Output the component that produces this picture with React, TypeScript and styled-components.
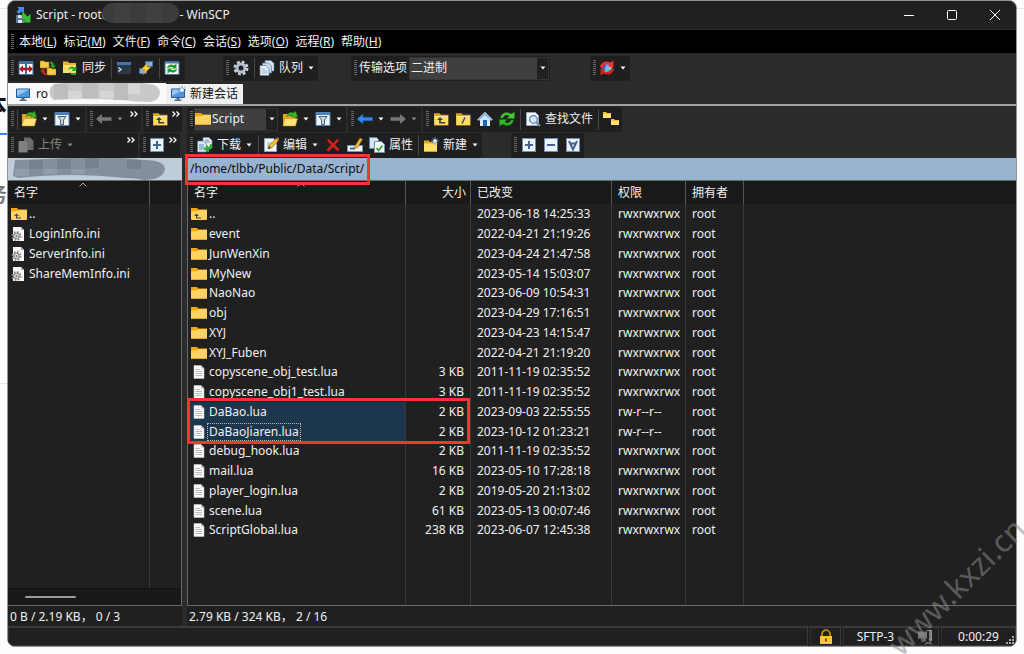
import React from "react";
import styled, { createGlobalStyle, css } from "styled-components";

const GlobalStyle = createGlobalStyle`
  * { box-sizing: border-box; }
  body { margin: 0; background: #fdfdfd; }
  body, button, select, input {
    font-family: "Noto Sans", "Noto Sans CJK SC", sans-serif;
    font-size: 12px;
    line-height: 18px;
  }
  button, select { margin: 0; padding: 0; border: 0; background: none; color: inherit; }
`;

/* ---------- page and window frame ---------- */

const Page = styled.div`
  position: relative;
  display: grid;
  grid-template-columns: 7px minmax(0, 1fr) 7px;
  height: 100vh;
  min-height: 480px;
  padding-bottom: 7px;
  overflow: hidden;
`;

const Gutter = styled.div`
  display: flex;
  flex-direction: column;
  align-items: flex-end;
  min-width: 0;
  padding-top: 8px;
  overflow: hidden;
`;

const Rule = styled.div<{ $blue?: boolean }>`
  flex: none;
  width: 100%;
  height: ${(p) => (p.$blue ? 2 : 1)}px;
  background: ${(p) => (p.$blue ? "#3a86f0" : "#e4e4e4")};
`;

const Peek = styled.div<{ $muted?: boolean }>`
  flex: none;
  height: ${(p) => (p.$muted ? 248 : 42)}px;
  padding-top: ${(p) => (p.$muted ? 46 : 0)}px;
  margin-top: ${(p) => (p.$muted ? 0 : 82)}px;
  font-size: ${(p) => (p.$muted ? 20 : 24)}px;
  font-weight: 700;
  line-height: 28px;
  color: ${(p) => (p.$muted ? "#777" : "#111")};
`;

const Window = styled.main`
  display: flex;
  flex-direction: column;
  min-width: 0;
  min-height: 0;
  border: 1px solid #8d9294;
  border-radius: 8px;
  background: #2b2b2b;
  color: #f0f0f0;
  overflow: hidden;
`;

const TitleBar = styled.header`
  display: flex;
  flex: none;
  align-items: center;
  height: 29px;
  padding-left: 7px;
  background: #202020;
  border-bottom: 1px solid #2c2c2c;
`;

const Title = styled.h1`
  display: flex;
  flex: 1;
  align-items: center;
  margin: 0 0 0 5px;
  font-size: 12px;
  font-weight: 400;
  white-space: pre;
`;

const Caption = styled.button`
  display: grid;
  place-items: center;
  width: 43px;
  height: 28px;
`;

const MenuBar = styled.nav`
  display: flex;
  flex: none;
  align-items: center;
  height: 23px;
  padding-left: 3px;
  background: #000;
`;

const MenuItem = styled.button`
  flex: none;
  margin-right: 7px;
  white-space: nowrap;
`;

/* ---------- toolbars ---------- */

const ToolRow = styled.div<{ $main?: boolean; $local?: boolean }>`
  display: flex;
  flex: none;
  align-items: center;
  gap: 2px;
  height: ${(p) => (p.$main ? 30 : 26)}px;
  padding-right: ${(p) => (p.$local ? 2 : 0)}px;
  overflow: hidden;
`;

const Band = styled.div<{ $offset?: number; $grow?: boolean; $end?: number }>`
  display: flex;
  flex: ${(p) => (p.$grow ? "1 1 0" : "none")};
  align-items: center;
  height: 25px;
  padding: 0 ${(p) => p.$end ?? 0}px 0 3px;
  margin-left: ${(p) => p.$offset ?? 0}px;
  border-radius: 2px;
  background: #1f1f1f;
`;

const Grip = styled.span`
  flex: none;
  width: 3px;
  height: 16px;
  margin-right: 1px;
  background: repeating-linear-gradient(#666 0 1px, transparent 1px 2px);
`;

const MenuGrip = styled(Grip)`
  margin-right: 5px;
`;

const Divider = styled.span`
  flex: none;
  width: 1px;
  height: 21px;
  margin: 0 1px 0 2px;
  background: #454545;
`;

const Tool = styled.button<{ $dim?: boolean; $tight?: boolean; $drop?: boolean }>`
  display: flex;
  flex: none;
  align-items: center;
  justify-content: center;
  gap: 4px;
  min-width: ${(p) => (p.$tight ? 19 : 22)}px;
  height: 22px;
  padding: 0 ${(p) => (p.$tight ? 0 : p.$drop ? 1 : 3)}px 0 ${(p) => (p.$tight ? 0 : 3)}px;
  color: ${(p) => (p.$dim ? "#858585" : "#f0f0f0")};
  white-space: nowrap;
`;

const DropButton = styled.button<{ $dim?: boolean }>`
  display: grid;
  flex: none;
  place-items: center;
  width: 14px;
  height: 22px;
  color: ${(p) => (p.$dim ? "#8a8a8a" : "#fff")};
`;

const MoreButton = styled.button`
  display: grid;
  place-items: center;
  align-self: flex-start;
  width: 14px;
  height: 14px;
  margin-left: auto;
`;

const Combo = styled.label<{ $wide?: boolean }>`
  display: flex;
  flex: none;
  align-items: center;
  height: 23px;
  width: ${(p) => (p.$wide ? 140 : 84)}px;
  margin-right: ${(p) => (p.$wide ? 0 : 2)}px;
  border: 1px solid #343434;
  background: #3f3f3f;

  select {
    flex: 1;
    min-width: 0;
    height: 21px;
    padding-left: 1px;
    appearance: none;
    outline: 0;
  }
`;

const ComboArrow = styled.span`
  display: grid;
  place-items: center;
  width: 11px;
  height: 21px;
  background: #202020;
`;

const BandLabel = styled.label`
  width: 51px;
  padding-left: 1px;
  white-space: nowrap;
`;

/* ---------- session tabs ---------- */

const Tabs = styled.div`
  display: flex;
  flex: none;
  align-items: flex-end;
  height: 23px;
  border-bottom: 2px solid #a2a2a2;
`;

const Tab = styled.button<{ $active?: boolean }>`
  display: flex;
  align-items: center;
  gap: ${(p) => (p.$active ? 5 : 4)}px;
  width: ${(p) => (p.$active ? 158 : 77)}px;
  height: ${(p) => (p.$active ? 21 : 20)}px;
  padding-left: ${(p) => (p.$active ? 7 : 4)}px;
  background: ${(p) => (p.$active ? "#fafafa" : "#f0f0f0")};
  color: #111;
  white-space: nowrap;
`;

/* ---------- panels ---------- */

const Panels = styled.div`
  display: grid;
  flex: 1;
  grid-template-columns: 174px minmax(0, 1fr);
  gap: 5px;
  min-height: 0;
`;

const Panel = styled.section`
  display: flex;
  flex-direction: column;
  min-width: 0;
  min-height: 0;
`;

const PathBar = styled.div<{ $active?: boolean }>`
  position: relative;
  display: flex;
  flex: none;
  align-items: center;
  height: 23px;
  padding-left: ${(p) => (p.$active ? 3 : 1)}px;
  border-bottom: 1px solid #686868;
  background: ${(p) => (p.$active ? "#99b4d1" : "#bfcddb")};
  color: #0b0b0b;
`;

const ListBox = styled.div<{ $active?: boolean }>`
  position: relative;
  display: flex;
  flex: 1;
  flex-direction: column;
  min-height: 0;
  border: solid #666a70;
  border-width: 0 ${(p) => (p.$active ? 0 : 1)}px 1px ${(p) => (p.$active ? 1 : 0)}px;
  background: #202020;
`;

const Scroller = styled.div`
  flex: 1;
  min-height: 0;
  overflow: hidden;
`;

const FileTable = styled.table`
  width: 100%;
  height: 100%;
  table-layout: fixed;
  border-collapse: separate;
  border-spacing: 0;

  th, td {
    padding: 0 6px;
    font-weight: 400;
    text-align: left;
    white-space: nowrap;
    border-left: 1px solid #363b40;
  }
  th:first-child, td:first-child { border-left: 0; padding: 0 0 0 3px; }
  th {
    position: relative;
    height: 23px;
    background: #191919;
    border-left-color: #555;
  }
  th:first-child { padding-left: 6px; }
`;

const Row = styled.tr<{ $selected?: boolean }>`
  height: 20px;
  &:nth-child(4n) { height: 19px; }
  ${(p) =>
    p.$selected &&
    css`
      td:first-child { background: #1b364d; }
    `}
`;

const FillRow = styled.tr`
  height: 100%;
`;

const FileCell = styled.div`
  display: flex;
  align-items: center;
  height: 19px;
`;

const FileName = styled.span<{ $focused?: boolean }>`
  padding: 0 1px;
  border: 1px ${(p) => (p.$focused ? "dotted #c9b79f" : "solid transparent")};
  line-height: 16px;
`;

const Numeric = styled.td`
  && { text-align: right; }
`;

const SizeHead = styled.th`
  && { text-align: right; padding-right: 4px; }
`;

const SortMark = styled.svg`
  position: absolute;
  top: 1px;
  left: 50%;
`;

const ScrollTrack = styled.div`
  flex: none;
  height: 17px;
  padding: 7px 0 0 17px;
  border-top: 1px solid #111;
  background: #181818;
`;

const ScrollThumb = styled.div`
  width: 51px;
  height: 2px;
  border-radius: 1px;
  background: #9a9a9a;
`;

const PanelStatus = styled.div`
  flex: none;
  height: 20px;
  padding: 2px 0 0 2px;
  background: #202020;
  white-space: pre;
`;

const Mark = styled.div<{ $rows?: boolean }>`
  position: absolute;
  z-index: 2;
  border: 3px solid #f63434;
  pointer-events: none;
  ${(p) =>
    p.$rows
      ? css`top: 217px; left: -1px; width: 283px; height: 46px;`
      : css`top: -4px; left: -2px; width: 185px; height: 31px;`}
`;

const StatusBar = styled.footer`
  display: flex;
  flex: none;
  gap: 2px;
  height: 20px;
  border-top: 1px solid #3a3a3a;
  background: #202020;
`;

const StatusCell = styled.div<{ $width?: number }>`
  display: flex;
  flex: ${(p) => (p.$width ? "none" : "1")};
  align-items: center;
  justify-content: center;
  width: ${(p) => (p.$width ? p.$width + "px" : "auto")};
  border: 1px solid #3a3a3a;
  border-left-color: #303030;
`;

const ClockCell = styled(StatusCell)`
  position: relative;
  svg { position: absolute; right: 1px; bottom: 1px; }
`;

const Watermark = styled.div`
  position: absolute;
  right: 68px;
  bottom: 68px;
  width: 0;
  height: 0;
  display: flex;
  align-items: center;
  justify-content: center;
  transform: rotate(-45deg);
  font-size: 31px;
  color: rgba(140, 140, 140, 0.55);
  white-space: nowrap;
  pointer-events: none;
`;

/* ---------- icons ---------- */

const IconSvg = styled.svg`
  flex: none;
`;

const Folder = () => (
  <>
    <path d="M1 2.200h5.500l1.400 1.600H15.500v10.700H1z" fill="#e0a21a" />
    <path d="M1.500 5h13.500v9H1.500z" fill="#ffdc62" />
    <path d="M1.500 5h13.500v1H1.500z" fill="#fff0a8" />
  </>
);
const Page16 = () => (
  <>
    <path d="M1.500 1.500h9l3 3v10h-12z" fill="#f2f6fa" stroke="#8ea6bd" />
    <path d="M4 6h6M4 8h7M4 10h5" stroke="#9bb2c8" />
  </>
);
const Screen = () => (
  <>
    <path d="M1.500 3h13v8.500h-13z" fill="#4f97dd" stroke="#2d5688" />
    <path d="M2 3.500h12L2 10z" fill="#93c7f5" />
    <path d="M6.500 12h3v1.500h2V15h-7v-1.500h2z" fill="#56708c" />
  </>
);
const Frame = ({ children }: { children: React.ReactNode }) => (
  <>
    <path d="M1 1h14v14H1z" fill="#6f8fb5" />
    <path d="M2 2h12v12H2z" fill="#edf3fa" />
    {children}
  </>
);

const icons = {
  app: (
    <>
      <path d="M1 8h8v8H1z" fill="#5f7896" />
      <path d="M3 8h4v3H3zM3 13h4v3H3z" fill="#dfe8f2" />
      <path d="M2 0h7v6.500L6.700 4.500 4 7 1.500 4.500 4.200 2z" fill="#3d8ff0" />
      <path d="M8 5l4.500 4.500L15.500 7v8.500H7.500l2.300-2.500-4-4z" fill="#37bf38" />
    </>
  ),
  compare: (
    <>
      <path d="M1 1.500h14v13H1z" fill="#f5f8fc" stroke="#45719f" />
      <path d="M1 1.500h14v2.500H1z" fill="#3d6fa8" />
      <path d="M8 2v12" stroke="#3d6fa8" strokeWidth="2" />
      <path d="M1 9l4-3.500v2.300h6V5.500L15 9l-4 3.500v-2.300H5v2.300z" fill="#b01818" />
    </>
  ),
  syncDirs: (
    <>
      <path d="M0 1h4l1 1h4v6H0zM7 8h4l1 1h4v6H7z" fill="#f4cd45" stroke="#b88210" strokeWidth=".6" />
      <path d="M10 1.500c3 0 4 1.500 4 4h2l-3 3-3-3h1.700c0-1.500-.5-2-1.700-2z" fill="#26a22b" />
      <path d="M6 15c-3 0-4-2-4-3.500H0l3-3 3 3H4.300c0 1 .7 1.500 1.700 1.500z" fill="#d42121" />
    </>
  ),
  syncFolder: (
    <>
      <path d="M1 1.500h5l1 1.500h7v10H1z" fill="#e8b62a" />
      <path d="M1 5h13v8H1z" fill="#ffe06c" />
      <path d="M5.500 10c2-4 5.500-4 7-2.500L14.500 6v5h-5l1.500-1.500C10 8.500 7.500 8.500 5.500 10zM7 11.500c2 2 4 2 6 1L15 14c-3 2-7 1-8-2.500z" fill="#2bab2d" />
    </>
  ),
  terminal: (
    <>
      <path d="M1 2h14v12H1z" fill="#2b3848" />
      <path d="M1 2h14v3H1z" fill="#4674ad" />
      <path d="M2.500 7.500L5 9.500l-2.500 2" stroke="#e4ebf2" strokeWidth="1.200" fill="none" />
    </>
  ),
  bolt: (
    <>
      <path d="M7 1h8v6H7zM1 8h8v6H1z" fill="#3f6ca4" />
      <path d="M8 2h6v4H8zM2 9h6v4H2z" fill="#86b3e0" />
      <path d="M10.500 2L3 9.500h4L4.500 15 13 7H9z" fill="#ffd13c" stroke="#a9750d" strokeWidth=".5" />
    </>
  ),
  refreshPage: (
    <>
      <path d="M1 1.500h14v13H1z" fill="#f5f8fc" stroke="#4a6e96" />
      <path d="M1 1.500h14v2H1z" fill="#4a78ad" />
      <path d="M3 8c.5-3.500 4.500-4.500 7-2.800L12.500 3.500v5H8l1-1.200C7.500 6.500 6 7 3 8zM13 9c-.5 3.500-4.500 4.500-7 2.800L3.500 13.500v-5H8L7 9.700c1.500.8 3 .3 6-.7z" fill="#22a12a" />
    </>
  ),
  gear: (
    <>
      <circle cx="8" cy="8" r="6" fill="none" stroke="#c7d1dc" strokeWidth="3" strokeDasharray="2.700 2.010" />
      <circle cx="8" cy="8" r="4" fill="none" stroke="#b4c0cd" strokeWidth="3" />
    </>
  ),
  queue: (
    <>
      <path d="M6 .5h6l3 3V11H6z" fill="#dce8f4" stroke="#5f7d9c" strokeWidth=".7" />
      <path d="M3.500 3h6l3 3v7h-9z" fill="#c8daec" stroke="#5f7d9c" strokeWidth=".7" />
      <path d="M1 5.500h6l3 3v7H1z" fill="#e7f0f8" stroke="#5f7d9c" strokeWidth=".7" />
      <path d="M2.500 9h4M2.500 11h6M2.500 13h6" stroke="#9cb4cc" />
    </>
  ),
  reconnect: (
    <>
      <circle cx="8" cy="8" r="5.500" fill="#2f62a8" />
      <path d="M3 9.500l3-1 1-4 4-.5-1 3 3 1.500-1 3-4 1z" fill="#6cb0f2" />
      <path d="M9 6l4-1v4l-3 .5zM3 10l3 .5L7 13H4z" fill="#8fd686" />
      <path d="M1 7.500C1.500 2 7 0 11.500 2.500L14.500.5V7H8.500l1.700-2C8 3.800 5 4 3.800 7.500z" fill="#e53434" />
      <path d="M15 8.500C14.500 14 9 16 4.500 13.500L1.500 15.500V9h4.500l-.8 2.500c2.800 1.200 6 0 7-3z" fill="#d02222" />
      <path d="M6.500 8.500L9 6l2 1.500L8.500 10z" fill="#7dbcf7" />
    </>
  ),
  screen: <Screen />,
  newScreen: (
    <>
      <Screen />
      <path d="M12 0v8M8 4h8M9.500 1.500l5 5M14.500 1.500l-5 5" stroke="#4f86bd" />
      <circle cx="12" cy="4" r="2" fill="#e4f2ff" />
    </>
  ),
  open: (
    <>
      <path d="M1 3h5l1 1.500h6.500V14H1z" fill="#dca823" />
      <path d="M3 7.500h12.500L13.500 15H1z" fill="#ffe377" stroke="#c39015" strokeWidth=".5" />
      <path d="M5 5.500C6 1.500 9 .5 11.500 2L13.500 0l2.200 6H9.500l1.500-1.500C9 3.500 7 4 5 5.500z" fill="#35b52e" stroke="#167a16" strokeWidth=".5" />
    </>
  ),
  filter: (
    <>
      <path d="M1 1.500h14v13H1z" fill="#f1f6fb" stroke="#5a88bd" />
      <path d="M1 1.500h14v2.500H1z" fill="#4b7db8" />
      <path d="M4 5.500h8L9.500 9v4.500h-3V9z" fill="#cbd5df" stroke="#4e6073" />
    </>
  ),
  backDim: <path d="M0 8l6-5v3.200h9.500v3.600H6V13z" fill="#777" />,
  back: <path d="M0 8l6-5v3.200h9.500v3.600H6V13z" fill="#3388ea" stroke="#1754a5" strokeWidth=".5" />,
  forwardDim: <path d="M16 8l-6-5v3.200H.5v3.600H10V13z" fill="#777" />,
  parent: (
    <>
      <Folder />
      <path d="M7 6L4 9h2.200v3.500h6v-1.400H7.800V9H10z" fill="#33404d" />
    </>
  ),
  root: (
    <>
      <Folder />
      <path d="M10 6.500L7 12.500" stroke="#33404d" strokeWidth="1.400" />
    </>
  ),
  home: (
    <>
      <path d="M3 7h10v8H3z" fill="#dceafa" />
      <path d="M.5 8.500L8 1l7.500 7.500-1.500 1L8 4 2 9.500z" fill="#7db1e8" stroke="#dceafa" strokeWidth=".5" />
      <path d="M8 4l5 4.500V10H3V8.500z" fill="#cfe3f8" />
      <path d="M6 9h4v6H6z" fill="#1c69c4" />
    </>
  ),
  refresh: (
    <>
      <path d="M1.500 7C2 2 8 0 12 3L15.500 1v6.500H8L10.300 5C8 3.200 5 4 4 7z" fill="#45c934" stroke="#137914" strokeWidth=".5" />
      <path d="M14.500 9c-.5 5-6.500 7-10.500 4L.5 15V8.500H8L5.700 11c2.300 1.800 5.300 1 6.300-2z" fill="#37b52b" stroke="#137914" strokeWidth=".5" />
    </>
  ),
  find: (
    <>
      <Page16 />
      <path d="M11.500 11.500L15 15" stroke="#72869b" strokeWidth="2" />
      <circle cx="8.500" cy="8.500" r="3.800" fill="#d3eafd" stroke="#5e7894" strokeWidth="1.200" />
    </>
  ),
  tree: (
    <>
      <path d="M4 8v4h5M7 4h3" fill="none" stroke="#111" strokeDasharray="1 1" />
      <path d="M0 1h3l1 1h4v5H0zM8 8h3l1 1h4v5H8z" fill="#f2bd2f" />
      <path d="M0 3h8v4H0zM8 10h8v4H8z" fill="#ffe37a" />
    </>
  ),
  uploadDim: (
    <>
      <path d="M6 .5h6l3.500 3.500v9H6z" fill="#6b6b6b" />
      <path d="M.5 4h7l2 2v9.500h-9z" fill="#808080" />
    </>
  ),
  download: (
    <>
      <path d="M6 .5h6l3 3V11H6z" fill="#f0f5fa" stroke="#6483a3" strokeWidth=".7" />
      <path d="M.5 4h6l3 3v8h-9z" fill="#dbe8f4" stroke="#557ba2" strokeWidth=".7" />
      <path d="M2 8h5M2 10h5M2 12h4M8 3h4M8 5h5" stroke="#6189b2" />
      <path d="M15 7c.5 3-.5 5-3 6v2.500L6 12l5-4v2c1.500-.4 2.200-1.500 2-3z" fill="#2cb534" />
    </>
  ),
  edit: (
    <>
      <Page16 />
      <path d="M5 12l1-3.500L13 1.500l2.500 2L8.500 11z" fill="#f6bd37" stroke="#8b611c" strokeWidth=".6" />
      <path d="M13 1.500l2.500 2 .5-2-1.500-1.300z" fill="#d96d54" />
      <path d="M5 12l1-3 2 1.700z" fill="#333" />
    </>
  ),
  remove: <path d="M2 3.500L3.800 2 8 6.300 12.500 1.800 14 3.300 10 8l4.500 4.500-2 1.800L8 10l-4.500 4.500L1.500 13 6 8z" fill="#dc1d1d" />,
  rename: (
    <>
      <path d="M.5 8.500h15v6H.5z" fill="#edf3f9" stroke="#7b93ab" />
      <path d="M3 11.500h5" stroke="#3b6fae" strokeWidth="2" />
      <path d="M7 12l1-3 5-8 2.500 1.500-5 8z" fill="#f5b93a" stroke="#8b611c" strokeWidth=".6" />
    </>
  ),
  properties: (
    <>
      <path d="M.5.5h7l2 2v9h-9z" fill="#d7e5f3" stroke="#6585a6" />
      <path d="M5.500 4.500h7l3 3v8h-10z" fill="#f8fbfd" stroke="#7890a8" />
      <path d="M7.500 11l2 2.500 4-5" fill="none" stroke="#27a12e" strokeWidth="1.600" />
    </>
  ),
  newFolder: (
    <>
      <path d="M1 3.500h5l1 1.500h7v9.500H1z" fill="#dfa61f" />
      <path d="M1 6.500h13v8H1z" fill="#ffdf69" />
      <path d="M12 0v8M8 4h8M9.500 1.500l5 5M14.500 1.500l-5 5" stroke="#6d9dcb" />
      <circle cx="12" cy="4" r="1.800" fill="#e9f4ff" />
    </>
  ),
  plus: <Frame><path d="M8 4v8M4 8h8" stroke="#44648b" strokeWidth="2" /></Frame>,
  minus: <Frame><path d="M4 8h8" stroke="#44648b" strokeWidth="2" /></Frame>,
  select: <Frame><path d="M4 4l4 8.500L12 4M5 6.500h6" fill="none" stroke="#44648b" strokeWidth="2" /></Frame>,
  folder: (
    <>
      <path d="M0 2h6l1.500 1.500H16V8H0z" fill="#f0a90c" />
      <path d="M0 5.500L7 5l1-1h7.500L16 4.500V13a1 1 0 0 1-1 1H1a1 1 0 0 1-1-1z" fill="#ffd361" />
      <path d="M.5 13.500h15" stroke="#e0a734" />
    </>
  ),
  folderUp: (
    <>
      <path d="M0 2h6l1.500 1.500H16V8H0z" fill="#f0a90c" />
      <path d="M0 5.500L7 5l1-1h7.500L16 4.500V13a1 1 0 0 1-1 1H1a1 1 0 0 1-1-1z" fill="#ffd361" />
      <path d="M5.500 7.500L3 10h2v2.500h5v-1H6.200V10H8z" fill="#39495a" />
    </>
  ),
  doc: (
    <>
      <path d="M3 1.500h7l3 3v10H3z" fill="#fafafa" stroke="#c9c9c9" strokeWidth=".6" />
      <path d="M10 1.500v3h3" fill="#c4c4c4" />
      <path d="M4.500 5.500h4M4.500 7.500h6.500M4.500 9.500h6.500M4.500 11.500h6.500" stroke="#aaa" strokeWidth=".8" />
    </>
  ),
  ini: (
    <>
      <path d="M2 1h8l3 3v11H2z" fill="#f7f7f7" />
      <path d="M10 1v3h3" fill="#aaa" />
      <circle cx="5.500" cy="10" r="4" fill="none" stroke="#8d8d8d" strokeWidth="2" strokeDasharray="1.600 1.540" />
      <circle cx="5.500" cy="10" r="2.800" fill="#ddd" stroke="#777" />
      <circle cx="5.500" cy="10" r="1" fill="#777" />
    </>
  ),
  lock: (
    <>
      <path d="M4 8V5a4 3.800 0 0 1 8 0v3" fill="none" stroke="#c48a14" strokeWidth="1.800" />
      <path d="M2 7h12v8H2z" fill="#f7bd2a" />
      <path d="M2 8.500h12M2 11h12M2 13.500h12" stroke="#ffdc70" strokeWidth=".7" />
      <path d="M8 9.500v3" stroke="#5c3f0a" strokeWidth="1.600" />
    </>
  ),
  network: (
    <>
      <path d="M1 2.500h9v7H1zM12 1.500h3v11h-3z" fill="#777" />
      <path d="M10 1.500h4.500v9H12M4 10h4v2H4M9 14h5M8 15.500l2-2M15 15.500l-2-2" fill="none" stroke="#999" />
    </>
  ),
};

type IconName = keyof typeof icons;
const Icon = ({ name }: { name: IconName }) => (
  <IconSvg width="16" height="16" viewBox="0 0 16 16" aria-hidden="true">
    {icons[name]}
  </IconSvg>
);

const Triangle = () => (
  <svg width="6" height="4" viewBox="0 0 6 4" aria-hidden="true">
    <path d="M.5 .5h5L3 3.500z" fill="currentColor" />
  </svg>
);

const Drop = ({ label, dim }: { label: string; dim?: boolean }) => (
  <DropButton $dim={dim} aria-label={label}>
    <Triangle />
  </DropButton>
);

const More = () => (
  <MoreButton aria-label="More">
    <svg width="8" height="6" viewBox="0 0 8 6" aria-hidden="true">
      <path d="M.5.5L3 3 .5 5.500M4.500.5L7 3 4.500 5.500" fill="none" stroke="#fff" strokeWidth="1.300" />
    </svg>
  </MoreButton>
);

type ToolProps = { name: IconName; label: string; dim?: boolean; tight?: boolean };
const IconTool = ({ name, label, dim, tight }: ToolProps) => (
  <Tool aria-label={label} $dim={dim} $tight={tight}>
    <Icon name={name} />
  </Tool>
);

type TextToolProps = { name: IconName; children: string; dim?: boolean; drop?: boolean };
const TextTool = ({ name, children, dim, drop }: TextToolProps) => (
  <Tool $dim={dim} $drop={drop}>
    <Icon name={name} />
    {children}
  </Tool>
);

const TitleBlot = styled.svg`
  flex: none;
  margin-left: -11px;
`;

const TitleSmudge = () => (
  <TitleBlot width="78" height="28" viewBox="0 0 78 28" aria-hidden="true">
    <rect x="0" y="2" width="77" height="20" rx="10" fill="#3c3c3c" />
    <path d="M12 2h16v20H12zM44 2h16v20H44z" fill="#404040" />
  </TitleBlot>
);

const TabBlot = styled.svg`
  flex: none;
  margin-left: -7px;
`;

const TabSmudge = () => (
  <TabBlot width="114" height="21" viewBox="0 0 114 21" aria-hidden="true">
    <path d="M9 1Q56-6 104 1a10 9 0 0 1 0 18Q90 19 76 17 40 15 8 17A9 9 0 0 1 9 1z" fill="#c9c9c9" />
    <path d="M8 1h14v15H8zM36 0h16v15H36zM68 0h14v17H68z" fill="#bdbdbd" />
    <path d="M22 8h14v8H22zM54 8h14v7H54zM82 1h12v10H82z" fill="#d6d6d6" />
  </TabBlot>
);

const PathSmudge = () => (
  <svg width="158" height="22" viewBox="0 0 158 22" aria-hidden="true">
    <path d="M6 2Q60 0 85-1q20 0 50 3 20 0 21 9-1 10-20 11-10-2-20-2Q60 14 10 20L4 18z" fill="#858f9c" />
    <path d="M20 2h14v9H20zM48 1h14v10H48zM76 0h14v10H76zM118 2h14v9h-14z" fill="#77818f" />
    <path d="M6 11h14v7H6zM34 11h14v5H34zM62 11h14v5H62z" fill="#929daa" />
  </svg>
);

/* ---------- data ---------- */

const menus = [
  ["本地", "L"], ["标记", "M"], ["文件", "F"], ["命令", "C"],
  ["会话", "S"], ["选项", "O"], ["远程", "R"], ["帮助", "H"],
];

type Entry = {
  icon: IconName;
  name: string;
  size?: string;
  date?: string;
  rights?: string;
  selected?: boolean;
  focused?: boolean;
};

const localFiles: Entry[] = [
  { icon: "folderUp", name: ".." },
  { icon: "ini", name: "LoginInfo.ini" },
  { icon: "ini", name: "ServerInfo.ini" },
  { icon: "ini", name: "ShareMemInfo.ini" },
];

const full = "rwxrwxrwx";
const remoteFiles: Entry[] = [
  { icon: "folderUp", name: "..", date: "2023-06-18 14:25:33", rights: full },
  { icon: "folder", name: "event", date: "2022-04-21 21:19:26", rights: full },
  { icon: "folder", name: "JunWenXin", date: "2023-04-24 21:47:58", rights: full },
  { icon: "folder", name: "MyNew", date: "2023-05-14 15:03:07", rights: full },
  { icon: "folder", name: "NaoNao", date: "2023-06-09 10:54:31", rights: full },
  { icon: "folder", name: "obj", date: "2023-04-29 17:16:51", rights: full },
  { icon: "folder", name: "XYJ", date: "2023-04-23 14:15:47", rights: full },
  { icon: "folder", name: "XYJ_Fuben", date: "2022-04-21 21:19:20", rights: full },
  { icon: "doc", name: "copyscene_obj_test.lua", size: "3 KB", date: "2011-11-19 02:35:52", rights: full },
  { icon: "doc", name: "copyscene_obj1_test.lua", size: "3 KB", date: "2011-11-19 02:35:52", rights: full },
  { icon: "doc", name: "DaBao.lua", size: "2 KB", date: "2023-09-03 22:55:55", rights: "rw-r--r--", selected: true },
  { icon: "doc", name: "DaBaoJiaren.lua", size: "2 KB", date: "2023-10-12 01:23:21", rights: "rw-r--r--", selected: true, focused: true },
  { icon: "doc", name: "debug_hook.lua", size: "2 KB", date: "2011-11-19 02:35:52", rights: full },
  { icon: "doc", name: "mail.lua", size: "16 KB", date: "2023-05-10 17:28:18", rights: full },
  { icon: "doc", name: "player_login.lua", size: "2 KB", date: "2019-05-20 21:13:02", rights: full },
  { icon: "doc", name: "scene.lua", size: "61 KB", date: "2023-05-13 00:07:46", rights: full },
  { icon: "doc", name: "ScriptGlobal.lua", size: "238 KB", date: "2023-06-07 12:45:38", rights: full },
];

const Col = styled.col<{ $width?: number }>`
  width: ${(p) => (p.$width ? p.$width + "px" : "auto")};
`;

const NameHead = () => (
  <th>
    名字
    <SortMark width="8" height="5" viewBox="0 0 8 5" aria-hidden="true">
      <path d="M.5 4.500L4 1l3.500 3.500" fill="none" stroke="#aaa" />
    </SortMark>
  </th>
);

const NameCell = ({ file }: { file: Entry }) => (
  <td>
    <FileCell>
      <Icon name={file.icon} />
      <FileName $focused={file.focused}>{file.name}</FileName>
    </FileCell>
  </td>
);

/* ---------- application ---------- */

export default function App() {
  return (
    <>
      <GlobalStyle />
      <Page>
        <Gutter>
          <Rule />
          <Peek>本</Peek>
          <Rule $blue />
          <Peek $muted>务</Peek>
          <Rule />
        </Gutter>
        <Window>
          <TitleBar>
            <Icon name="app" />
            <Title>
              Script - root@
              <TitleSmudge />
              {"- WinSCP"}
            </Title>
            <Caption aria-label="Minimize">
              <svg width="10" height="10" viewBox="0 0 10 10"><path d="M0 5.500h10" stroke="#fff" /></svg>
            </Caption>
            <Caption aria-label="Maximize">
              <svg width="10" height="10" viewBox="0 0 10 10"><rect x=".5" y=".5" width="9" height="9" rx="1" fill="none" stroke="#fff" /></svg>
            </Caption>
            <Caption aria-label="Close">
              <svg width="10" height="10" viewBox="0 0 10 10"><path d="M0 0l10 10M10 0L0 10" stroke="#fff" /></svg>
            </Caption>
          </TitleBar>

          <MenuBar>
            <MenuGrip />
            {menus.map(([text, key]) => (
              <MenuItem key={key}>
                {text}(<u>{key}</u>)
              </MenuItem>
            ))}
          </MenuBar>

          <ToolRow $main>
            <Band $end={2}>
              <Grip />
              <IconTool name="compare" label="Compare" />
              <IconTool name="syncDirs" label="Synchronize browsing" />
              <TextTool name="syncFolder">同步</TextTool>
              <Divider />
              <IconTool name="terminal" label="Console" />
              <IconTool name="bolt" label="PuTTY" />
              <Divider />
              <IconTool name="refreshPage" label="Refresh panels" />
            </Band>
            <Band $offset={36}>
              <Grip />
              <IconTool name="gear" label="Preferences" />
              <Divider />
              <TextTool name="queue" drop>队列</TextTool>
              <Drop label="Queue options" />
            </Band>
            <Band $offset={31} $end={1}>
              <Grip />
              <BandLabel htmlFor="transfer">传输选项</BandLabel>
              <Combo $wide>
                <select id="transfer"><option>二进制</option></select>
                <ComboArrow><Triangle /></ComboArrow>
              </Combo>
            </Band>
            <Band $offset={38}>
              <Grip />
              <IconTool name="reconnect" label="Reconnect" tight />
              <Drop label="Reconnect options" />
            </Band>
          </ToolRow>

          <Tabs>
            <Tab $active>
              <Icon name="screen" />
              <span>ro</span>
              <TabSmudge />
            </Tab>
            <Tab>
              <Icon name="newScreen" />
              新建会话
            </Tab>
          </Tabs>

          <Panels>
            <Panel>
              <ToolRow $local>
                <Band>
                  <Grip />
                  <Divider />
                  <IconTool name="open" label="Open directory" tight />
                  <Drop label="Directories" />
                  <IconTool name="filter" label="Filter" tight />
                  <Drop label="Filter options" />
                </Band>
                <Band $grow>
                  <Grip />
                  <IconTool name="backDim" label="Back" tight dim />
                  <Drop label="History" dim />
                  <More />
                </Band>
                <Band>
                  <Grip />
                  <IconTool name="parent" label="Parent directory" tight />
                  <More />
                </Band>
              </ToolRow>
              <ToolRow $local>
                <Band $grow>
                  <Grip />
                  <TextTool name="uploadDim" dim drop>上传</TextTool>
                  <Drop label="Upload options" dim />
                  <More />
                </Band>
                <Band>
                  <Grip />
                  <IconTool name="plus" label="Select" tight />
                  <More />
                </Band>
              </ToolRow>
              <PathBar><PathSmudge /></PathBar>
              <ListBox>
                <Scroller>
                  <FileTable>
                    <colgroup><Col $width={141} /><Col /></colgroup>
                    <thead><tr><NameHead /><th /></tr></thead>
                    <tbody>
                      {localFiles.map((f) => (
                        <Row key={f.name}><NameCell file={f} /><td /></Row>
                      ))}
                      <FillRow><td /><td /></FillRow>
                    </tbody>
                  </FileTable>
                </Scroller>
                <ScrollTrack><ScrollThumb /></ScrollTrack>
              </ListBox>
              <PanelStatus>0 B / 2.19 KB， 0 / 3</PanelStatus>
            </Panel>

            <Panel>
              <ToolRow>
                <Band>
                  <Grip />
                  <Combo>
                    <Icon name="folder" />
                    <select aria-label="Directory"><option>Script</option></select>
                    <ComboArrow><Triangle /></ComboArrow>
                  </Combo>
                  <IconTool name="open" label="Open directory" tight />
                  <Drop label="Directories" />
                  <IconTool name="filter" label="Filter" tight />
                  <Drop label="Filter options" />
                </Band>
                <Band>
                  <Grip />
                  <IconTool name="back" label="Back" tight />
                  <Drop label="Back history" />
                  <IconTool name="forwardDim" label="Forward" tight dim />
                  <Drop label="Forward history" dim />
                </Band>
                <Band>
                  <Grip />
                  <IconTool name="parent" label="Parent directory" />
                  <IconTool name="root" label="Root directory" />
                  <IconTool name="home" label="Home directory" />
                  <IconTool name="refresh" label="Refresh" />
                  <Divider />
                  <TextTool name="find">查找文件</TextTool>
                  <Divider />
                  <IconTool name="tree" label="Directory tree" />
                </Band>
              </ToolRow>
              <ToolRow>
                <Band>
                  <Grip />
                  <TextTool name="download" drop>下载</TextTool>
                  <Drop label="Download options" />
                  <Divider />
                  <TextTool name="edit" drop>编辑</TextTool>
                  <Drop label="Edit options" />
                  <IconTool name="remove" label="Delete" />
                  <IconTool name="rename" label="Rename" />
                  <TextTool name="properties">属性</TextTool>
                  <Divider />
                  <TextTool name="newFolder" drop>新建</TextTool>
                  <Drop label="New options" />
                </Band>
                <Band $offset={27}>
                  <Grip />
                  <IconTool name="plus" label="Select files" />
                  <IconTool name="minus" label="Unselect files" />
                  <IconTool name="select" label="Select all" />
                </Band>
              </ToolRow>
              <PathBar $active>
                /home/tlbb/Public/Data/Script/
                <Mark />
              </PathBar>
              <ListBox $active>
                <Scroller>
                  <FileTable>
                    <colgroup>
                      <Col $width={217} /><Col $width={65} /><Col $width={141} />
                      <Col $width={74} /><Col $width={58} /><Col />
                    </colgroup>
                    <thead>
                      <tr>
                        <NameHead />
                        <SizeHead>大小</SizeHead>
                        <th>已改变</th>
                        <th>权限</th>
                        <th>拥有者</th>
                        <th />
                      </tr>
                    </thead>
                    <tbody>
                      {remoteFiles.map((f) => (
                        <Row key={f.name} $selected={f.selected}>
                          <NameCell file={f} />
                          <Numeric>{f.size}</Numeric>
                          <td>{f.date}</td>
                          <td>{f.rights}</td>
                          <td>root</td>
                          <td />
                        </Row>
                      ))}
                      <FillRow><td /><td /><td /><td /><td /><td /></FillRow>
                    </tbody>
                  </FileTable>
                </Scroller>
                <Mark $rows />
              </ListBox>
              <PanelStatus>2.79 KB / 324 KB， 2 / 16</PanelStatus>
            </Panel>
          </Panels>

          <StatusBar>
            <StatusCell />
            <StatusCell $width={31}><Icon name="lock" /></StatusCell>
            <StatusCell $width={65}>SFTP-3</StatusCell>
            <StatusCell $width={29}><Icon name="network" /></StatusCell>
            <ClockCell $width={75}>
              0:00:29
              <svg width="8" height="8" viewBox="0 0 8 8" aria-hidden="true">
                <path d="M6 0h2v2H6zM3 3h2v2H3zM6 3h2v2H6zM0 6h2v2H0zM3 6h2v2H3zM6 6h2v2H6z" fill="#aaa" />
              </svg>
            </ClockCell>
          </StatusBar>
        </Window>
        <Gutter><Rule /></Gutter>
        <Watermark>www.kxzi.cn</Watermark>
      </Page>
    </>
  );
}
